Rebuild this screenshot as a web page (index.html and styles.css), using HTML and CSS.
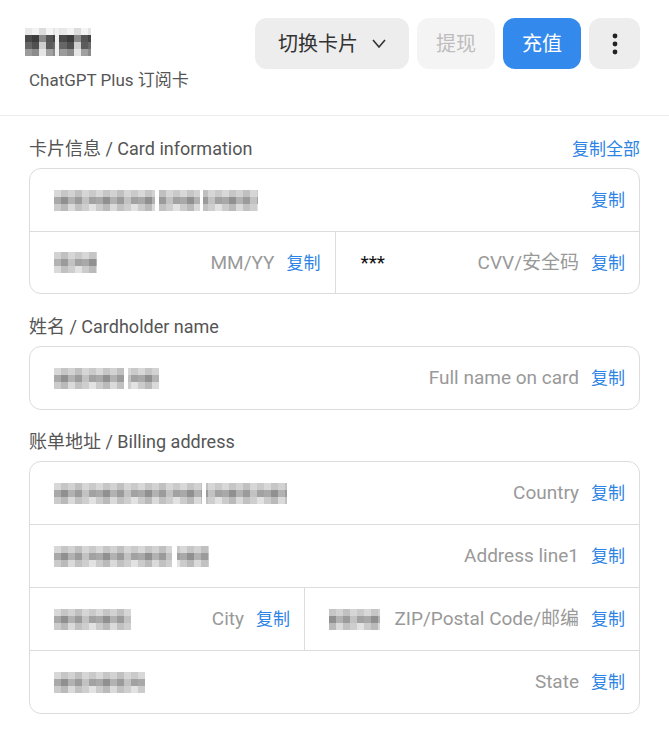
FILE: index.html
```html
<!DOCTYPE html>
<html lang="zh-CN">
<head>
<meta charset="utf-8">
<title>ChatGPT Plus 订阅卡</title>
<link rel="stylesheet" href="styles.css">
</head>
<body>
<svg class="defs" width="0" height="0" aria-hidden="true">
  <defs>
    <pattern id="pm" patternUnits="userSpaceOnUse" width="42" height="21">
      <rect x="0" y="0" width="7" height="7" fill="#d8d8d8"/><rect x="7" y="0" width="7" height="7" fill="#c6c6c6"/><rect x="14" y="0" width="7" height="7" fill="#d2d2d2"/><rect x="21" y="0" width="7" height="7" fill="#c0c0c0"/><rect x="28" y="0" width="7" height="7" fill="#d6d6d6"/><rect x="35" y="0" width="7" height="7" fill="#cacaca"/>
      <rect x="0" y="7" width="7" height="7" fill="#a9a9a9"/><rect x="7" y="7" width="7" height="7" fill="#909090"/><rect x="14" y="7" width="7" height="7" fill="#b2b2b2"/><rect x="21" y="7" width="7" height="7" fill="#9b9b9b"/><rect x="28" y="7" width="7" height="7" fill="#c2c2c2"/><rect x="35" y="7" width="7" height="7" fill="#a2a2a2"/>
      <rect x="0" y="14" width="7" height="7" fill="#cbcbcb"/><rect x="7" y="14" width="7" height="7" fill="#bababa"/><rect x="14" y="14" width="7" height="7" fill="#dadada"/><rect x="21" y="14" width="7" height="7" fill="#c1c1c1"/><rect x="28" y="14" width="7" height="7" fill="#cecece"/><rect x="35" y="14" width="7" height="7" fill="#e2e2e2"/>
    </pattern>
    <pattern id="pd" patternUnits="userSpaceOnUse" width="35" height="28">
      <rect x="0" y="0" width="7" height="7" fill="#e8e8e8"/><rect x="7" y="0" width="7" height="7" fill="#f2f2f2"/><rect x="14" y="0" width="7" height="7" fill="#dcdcdc"/><rect x="21" y="0" width="7" height="7" fill="#f4f4f4"/><rect x="28" y="0" width="7" height="7" fill="#e4e4e4"/>
      <rect x="0" y="7" width="7" height="7" fill="#4a4a4a"/><rect x="7" y="7" width="7" height="7" fill="#3c3c3c"/><rect x="14" y="7" width="7" height="7" fill="#8a8a8a"/><rect x="21" y="7" width="7" height="7" fill="#555555"/><rect x="28" y="7" width="7" height="7" fill="#444444"/>
      <rect x="0" y="14" width="7" height="7" fill="#666666"/><rect x="7" y="14" width="7" height="7" fill="#505050"/><rect x="14" y="14" width="7" height="7" fill="#cfcfcf"/><rect x="21" y="14" width="7" height="7" fill="#5c5c5c"/><rect x="28" y="14" width="7" height="7" fill="#6a6a6a"/>
      <rect x="0" y="21" width="7" height="7" fill="#9c9c9c"/><rect x="7" y="21" width="7" height="7" fill="#8c8c8c"/><rect x="14" y="21" width="7" height="7" fill="#e6e6e6"/><rect x="21" y="21" width="7" height="7" fill="#a0a0a0"/><rect x="28" y="21" width="7" height="7" fill="#8a8a8a"/>
    </pattern>
  </defs>
</svg>

<header class="header">
  <div class="brand">
    <svg class="mz-title" width="66" height="28" viewBox="0 0 66 28" aria-hidden="true">
      <rect width="66" height="28" fill="url(#pd)"/>
      <rect x="30" y="0" width="4" height="28" fill="#f0f0f0"/>
    </svg>
    <div class="subtitle">ChatGPT Plus 订阅卡</div>
  </div>
  <div class="actions">
    <button class="btn btn-gray btn-switch">切换卡片
      <svg class="chev" width="14" height="9" viewBox="0 0 14 9" aria-hidden="true"><polyline points="1,1 7,8 13,1" fill="none" stroke="#333" stroke-width="1.6"/></svg>
    </button>
    <button class="btn btn-disabled">提现</button>
    <button class="btn btn-blue">充值</button>
    <button class="btn btn-gray btn-more" aria-label="更多">
      <svg width="6" height="22" viewBox="0 0 6 22" aria-hidden="true"><circle cx="3" cy="3" r="2.4" fill="#222"/><circle cx="3" cy="11" r="2.4" fill="#222"/><circle cx="3" cy="19" r="2.4" fill="#222"/></svg>
    </button>
  </div>
</header>

<main class="content">
  <div class="label"><span>卡片信息 / Card information</span><a class="link link-all">复制全部</a></div>
  <div class="box">
    <div class="row">
      <svg class="mz" width="204" height="21" viewBox="0 0 204 21" aria-hidden="true"><rect width="204" height="21" fill="url(#pm)"/><rect x="101" width="4" height="21" fill="#fff"/><rect x="146" width="3" height="21" fill="#fff"/></svg>
      <span class="spacer"></span>
      <a class="link">复制</a>
    </div>
    <div class="row-split row-split-card">
      <div class="cell">
        <svg class="mz" width="57" height="21" viewBox="0 0 57 21" aria-hidden="true"><rect width="57" height="21" fill="url(#pm)" transform="translate(-14 0)"/></svg>
        <span class="ph">MM/YY</span>
        <a class="link">复制</a>
      </div>
      <div class="cell cell-right">
        <span class="val">***</span>
        <span class="ph">CVV/安全码</span>
        <a class="link">复制</a>
      </div>
    </div>
  </div>

  <div class="label"><span>姓名 / Cardholder name</span></div>
  <div class="box">
    <div class="row">
      <svg class="mz" width="105" height="21" viewBox="0 0 105 21" aria-hidden="true"><rect width="105" height="21" fill="url(#pm)"/><rect x="70" width="4" height="21" fill="#fff"/></svg>
      <span class="ph">Full name on card</span>
      <a class="link">复制</a>
    </div>
  </div>

  <div class="label label-billing"><span>账单地址 / Billing address</span></div>
  <div class="box">
    <div class="row">
      <svg class="mz" width="233" height="21" viewBox="0 0 233 21" aria-hidden="true"><rect width="233" height="21" fill="url(#pm)"/><rect x="148" width="4" height="21" fill="#fff"/></svg>
      <span class="ph">Country</span>
      <a class="link">复制</a>
    </div>
    <div class="row">
      <svg class="mz" width="155" height="21" viewBox="0 0 155 21" aria-hidden="true"><rect width="155" height="21" fill="url(#pm)"/><rect x="118" width="5" height="21" fill="#fff"/></svg>
      <span class="ph">Address line1</span>
      <a class="link">复制</a>
    </div>
    <div class="row-split row-split-addr">
      <div class="cell">
        <svg class="mz" width="77" height="21" viewBox="0 0 77 21" aria-hidden="true"><rect width="77" height="21" fill="url(#pm)"/></svg>
        <span class="ph">City</span>
        <a class="link">复制</a>
      </div>
      <div class="cell cell-right cell-zip">
        <svg class="mz" width="58" height="21" viewBox="0 0 58 21" aria-hidden="true"><rect width="58" height="21" fill="url(#pm)" transform="translate(-7 0)"/></svg>
        <span class="ph">ZIP/Postal Code/邮编</span>
        <a class="link">复制</a>
      </div>
    </div>
    <div class="row">
      <svg class="mz" width="91" height="21" viewBox="0 0 91 21" aria-hidden="true"><rect width="91" height="21" fill="url(#pm)"/></svg>
      <span class="ph">State</span>
      <a class="link">复制</a>
    </div>
  </div>
</main>
</body>
</html>
```

FILE: styles.css
```css
* { box-sizing: border-box; }

html, body {
  margin: 0;
  padding: 0;
  background: #ffffff;
}

body {
  font-family: Roboto, "Noto Sans CJK SC", "Noto Sans", sans-serif;
  color: #333;
  width: 669px;
}

.defs {
  display: block;
  width: 0;
  height: 0;
  overflow: hidden;
}

.header {
  display: flex;
  justify-content: space-between;
  align-items: flex-start;
  height: 116px;
  padding: 18px 29px 0 29px;
  border-bottom: 1px solid #ececec;
}

.brand {
  display: flex;
  flex-direction: column;
  padding-top: 10px;
}

.mz-title {
  display: block;
  margin-left: -4px;
}

.subtitle {
  margin-top: 13px;
  font-size: 17px;
  line-height: 22px;
  color: #555;
}

.actions {
  display: flex;
  gap: 8px;
}

.btn {
  display: flex;
  align-items: center;
  justify-content: center;
  height: 51px;
  padding: 0 19px;
  border: none;
  border-radius: 12px;
  font-family: inherit;
  font-size: 20px;
  line-height: 1;
  cursor: pointer;
}

.btn-gray {
  background: #ededed;
  color: #333;
}

.btn-switch {
  padding: 0 23px;
  gap: 14px;
}

.chev {
  display: block;
}

.btn-disabled {
  background: #f4f4f4;
  color: #bdbdbd;
}

.btn-blue {
  background: #3389ec;
  color: #ffffff;
}

.btn-more {
  width: 51px;
  padding: 0;
}

.content {
  padding: 0 29px;
}

.label {
  display: flex;
  justify-content: space-between;
  align-items: center;
  margin: 22px 0 8px;
  font-size: 18px;
  line-height: 22px;
  color: #555;
}

.label-billing {
  margin-top: 21px;
}

.link {
  color: #2d84e4;
  font-size: 17px;
  line-height: 22px;
  cursor: pointer;
  white-space: nowrap;
  flex: none;
}

.box {
  border: 1px solid #dcdcdc;
  border-radius: 12px;
  overflow: hidden;
}

.row {
  box-sizing: content-box;
  display: flex;
  align-items: center;
  height: 62px;
  padding: 0 14px 0 24px;
}

.box > * + * {
  border-top: 1px solid #dcdcdc;
}

.row-split {
  box-sizing: content-box;
  display: grid;
  grid-template-columns: minmax(0, 1fr) minmax(0, 1fr);
  height: 62px;
}

.row-split-card {
  height: 61px;
}

.row-split-addr {
  grid-template-columns: 274px minmax(0, 1fr);
}

.cell {
  display: flex;
  align-items: center;
  padding: 0 14px 0 24px;
  min-width: 0;
}

.cell-right {
  border-left: 1px solid #dcdcdc;
  padding-left: 25px;
}

.cell-zip {
  padding-left: 24px;
}

.mz {
  display: block;
  flex: none;
}

.spacer {
  flex: 1;
}

.val {
  font-size: 19px;
  color: #111;
}

.ph {
  margin-left: auto;
  margin-right: 12px;
  font-size: 19px;
  line-height: 22px;
  color: #999;
  white-space: nowrap;
}
```
